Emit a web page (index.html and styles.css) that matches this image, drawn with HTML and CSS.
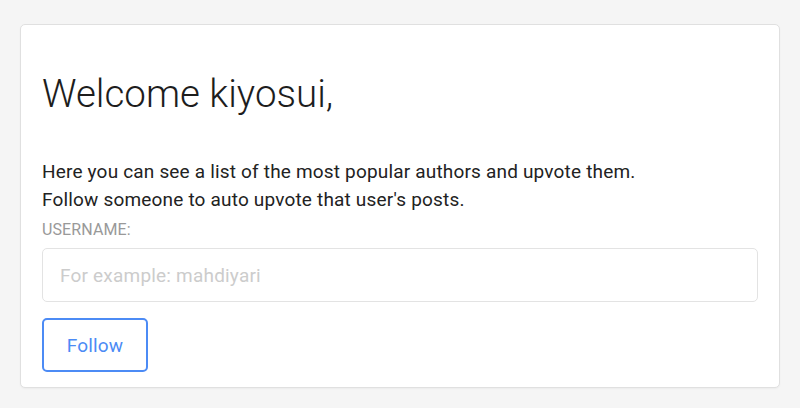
FILE: index.html
```html
<!DOCTYPE html>
<html lang="en">
<head>
  <meta charset="UTF-8">
  <meta name="viewport" content="width=device-width, initial-scale=1.0">
  <title>Follow authors</title>
  <link rel="stylesheet" href="styles.css">
</head>
<body>
  <div class="card">
    <h1>Welcome kiyosui,</h1>
    <p class="intro">
      Here you can see a list of the most popular authors and upvote them.<br>
      Follow someone to auto upvote that user's posts.
    </p>
    <form class="follow-form">
      <label for="username">Username:</label>
      <input id="username" type="text" placeholder="For example: mahdiyari">
      <div>
        <button type="submit">Follow</button>
      </div>
    </form>
  </div>
</body>
</html>
```

FILE: styles.css
```css
body {
  font-family: Roboto, sans-serif;
  margin: 0;
  padding: 24px 20px;
  background: #f5f5f5;
  color: #222;
}
.card {
  background: #fff;
  border: 1px solid #e0e0e0;
  border-radius: 5px;
  padding: 45px 21px 15px;
  box-shadow: 0 1px 2px rgba(0, 0, 0, 0.04);
}
h1 {
  font-weight: 300;
  font-size: 38.5px;
  line-height: 48px;
  margin: 0 0 40px;
  color: #1d1d1d;
}
.intro {
  font-size: 19px;
  letter-spacing: 0.18px;
  line-height: 28px;
  margin: 0 0 6px;
}
.follow-form {
  display: flex;
  flex-direction: column;
}
label {
  text-transform: uppercase;
  color: #999;
  font-size: 16px;
  letter-spacing: 0.1px;
  line-height: 20px;
  margin-bottom: 8px;
}
input {
  font-family: Roboto, sans-serif;
  font-size: 19px;
  letter-spacing: 0.2px;
  height: 54px;
  box-sizing: border-box;
  padding: 0 17px;
  border: 1.5px solid #e3e3e3;
  border-radius: 5px;
  outline: none;
  margin-bottom: 16px;
}
input::placeholder {
  color: #ccc;
}
button {
  font-family: Roboto, sans-serif;
  font-size: 19px;
  letter-spacing: 0.2px;
  color: #4c8bf5;
  background: #fff;
  border: 2px solid #4c8bf5;
  border-radius: 5px;
  width: 106px;
  height: 54px;
  cursor: pointer;
}
```
